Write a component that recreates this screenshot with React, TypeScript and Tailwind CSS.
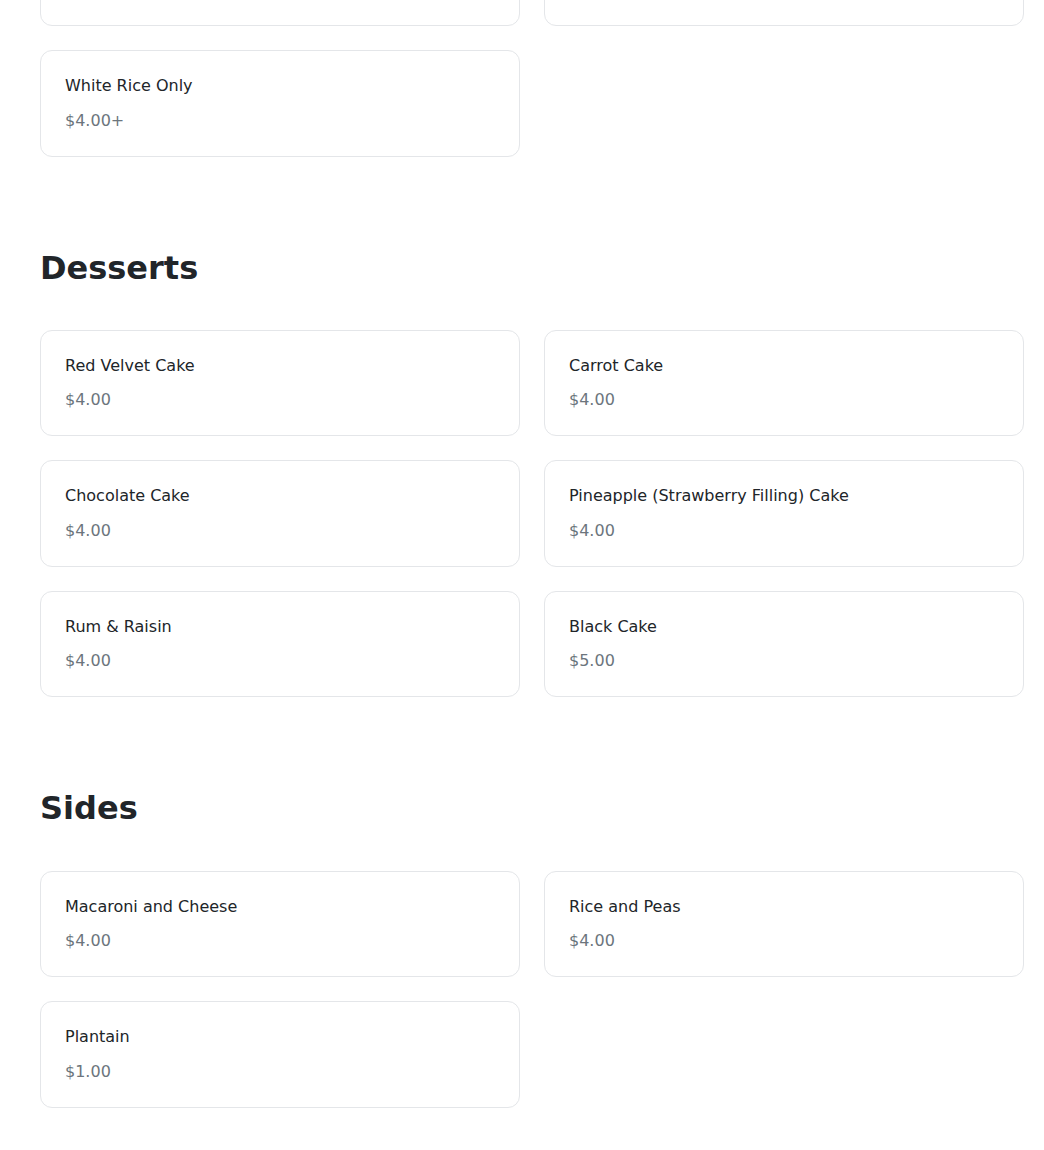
const SECTIONS = [
  {
    title: null,
    items: [
      { name: 'Fried Rice', price: '$4.00+' },
      { name: 'Jollof Rice', price: '$4.00+' },
      { name: 'White Rice Only', price: '$4.00+' },
    ],
  },
  {
    title: 'Desserts',
    items: [
      { name: 'Red Velvet Cake', price: '$4.00' },
      { name: 'Carrot Cake', price: '$4.00' },
      { name: 'Chocolate Cake', price: '$4.00' },
      { name: 'Pineapple (Strawberry Filling) Cake', price: '$4.00' },
      { name: 'Rum & Raisin', price: '$4.00' },
      { name: 'Black Cake', price: '$5.00' },
    ],
  },
  {
    title: 'Sides',
    items: [
      { name: 'Macaroni and Cheese', price: '$4.00' },
      { name: 'Rice and Peas', price: '$4.00' },
      { name: 'Plantain', price: '$1.00' },
    ],
  },
];

function MenuCard({ name, price }: { name: string; price: string }) {
  return (
    <div className="rounded-xl border border-[#e4e6e9] bg-white px-6 pt-[23px] pb-[23px]">
      <h3 className="text-base leading-6 font-normal text-[#212529]">{name}</h3>
      <p className="mt-[10.5px] text-base leading-6 text-[#6c757d]">{price}</p>
    </div>
  );
}

export default function App() {
  return (
    <div
      className="min-h-[1150px] bg-white pl-10 pr-5 pb-10"
      style={{ fontFamily: '"DejaVu Sans", "Noto Sans", sans-serif' }}
    >
      <div className="-mt-[80.5px] flex flex-col">
        {SECTIONS.map((section, i) => (
          <section key={i} className={section.title ? 'pt-[92px]' : ''}>
            {section.title && (
              <h2 className="mb-[43px] text-[32px] leading-[38.4px] font-bold text-[#212529]">
                {section.title}
              </h2>
            )}
            <div className="grid grid-cols-2 gap-6">
              {section.items.map((item) => (
                <MenuCard key={item.name} {...item} />
              ))}
            </div>
          </section>
        ))}
      </div>
    </div>
  );
}
